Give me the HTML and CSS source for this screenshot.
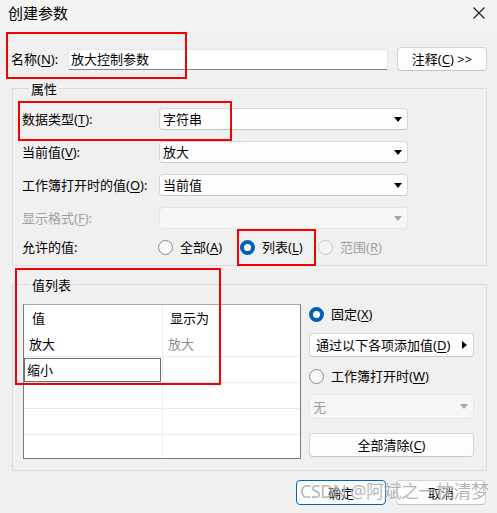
FILE: index.html
```html
<!DOCTYPE html>
<html lang="zh-CN">
<head>
    <meta charset="UTF-8">
    <title>创建参数</title>
    <link rel="stylesheet" href="styles.css">
</head>
<body>

    <div class="window">
        <div class="titlebar">
            <span class="title">创建参数</span>
            <svg class="close" width="12" height="12" viewBox="0 0 12 12">
                <path d="M0.5 0.5L11.5 11.5M11.5 0.5L0.5 11.5" stroke="#1b1b1b" stroke-width="1.1" fill="none"/>
            </svg>
        </div>

        <div class="name-row">
            <span class="name-label">名称(<u>N</u>):</span>
            <div class="textbox">放大控制参数</div>
            <div class="btn btn-note"><span>注释(<u>C</u>) &gt;&gt;</span></div>
        </div>

        <!-- 属性 -->
        <div class="group group-props">
            <span class="group-title">属性</span>

            <div class="form-row">
                <span class="form-label">数据类型(<u>T</u>):</span>
                <div class="combo"><span>字符串</span><i class="arrow"></i></div>
            </div>
            <div class="form-row">
                <span class="form-label">当前值(<u>V</u>):</span>
                <div class="combo"><span>放大</span><i class="arrow"></i></div>
            </div>
            <div class="form-row">
                <span class="form-label">工作簿打开时的值(<u>O</u>):</span>
                <div class="combo"><span>当前值</span><i class="arrow"></i></div>
            </div>
            <div class="form-row">
                <span class="form-label disabled">显示格式(<u>F</u>):</span>
                <div class="combo combo-disabled"><span></span><i class="arrow"></i></div>
            </div>
            <div class="form-row radio-row">
                <span class="form-label">允许的值:</span>
                <div class="radios">
                    <span class="radio radio-all"><i class="circle"></i><span>全部(<u>A</u>)</span></span>
                    <span class="radio radio-list checked"><i class="circle"></i><span>列表(<u>L</u>)</span></span>
                    <span class="radio disabled"><i class="circle"></i><span>范围(<u>R</u>)</span></span>
                </div>
            </div>
        </div>

        <!-- 值列表 -->
        <div class="group group-list">
            <span class="group-title">值列表</span>
            <div class="list-body">
                <div class="value-table">
                    <div class="vt-row vt-head">
                        <div class="vt-cell">值</div>
                        <div class="vt-cell">显示为</div>
                    </div>
                    <div class="vt-row">
                        <div class="vt-cell">放大</div>
                        <div class="vt-cell muted">放大</div>
                    </div>
                    <div class="vt-row">
                        <div class="vt-cell vt-edit"><div class="cell-edit">缩小</div></div>
                        <div class="vt-cell"></div>
                    </div>
                    <div class="vt-row">
                        <div class="vt-cell"></div>
                        <div class="vt-cell"></div>
                    </div>
                    <div class="vt-row">
                        <div class="vt-cell"></div>
                        <div class="vt-cell"></div>
                    </div>
                    <div class="vt-row vt-last">
                        <div class="vt-cell"></div>
                        <div class="vt-cell"></div>
                    </div>
                </div>

                <div class="list-side">
                    <span class="radio checked side-radio"><i class="circle"></i><span>固定(<u>X</u>)</span></span>
                    <div class="btn btn-add"><span>通过以下各项添加值(<u>D</u>)</span><i class="arrow-right"></i></div>
                    <span class="radio side-radio side-radio-2"><i class="circle"></i><span>工作簿打开时(<u>W</u>)</span></span>
                    <div class="combo combo-disabled combo-none"><span>无</span><i class="arrow"></i></div>
                    <div class="btn btn-clear"><span>全部清除(<u>C</u>)</span></div>
                </div>
            </div>
        </div>

        <div class="footer">
            <div class="btn btn-ok">确定</div>
            <div class="btn">取消</div>
        </div>

        <!-- red annotation boxes -->
        <span class="mark mark-name"></span>
        <span class="mark mark-type"></span>
        <span class="mark mark-list"></span>
        <span class="mark mark-values"></span>

        <span class="watermark">CSDN @阿斌之一枕清梦</span>
    </div>

</body>
</html>
```

FILE: styles.css
```css
body {
    margin: 0;
    font-family: "Noto Sans", "Noto Sans CJK SC", sans-serif;
    font-size: 13px;
    color: #000;
    background-color: #f0f0f0;
}

u {
    text-decoration-thickness: 1px;
    text-underline-offset: 2px;
}

.window {
    position: relative;
    width: 497px;
    height: 513px;
    background-color: #f0f0f0;
    overflow: hidden;
}

.titlebar {
    height: 26px;
    padding: 0 12px 6px 8px;
    display: flex;
    align-items: center;
    justify-content: space-between;
    background-color: #f3f3f3;
}

.title {
    font-size: 15px;
    line-height: 18px;
}

/* name row */
.name-row {
    display: flex;
    align-items: center;
    height: 24px;
    margin-top: 15px;
    padding-left: 11px;
}

.name-label {
    width: 57px;
    line-height: 18px;
}

.textbox {
    width: 316px;
    height: 19px;
    padding-left: 2px;
    line-height: 19px;
    background-color: #fff;
    border: 1px solid #e6e6e6;
    border-bottom-color: #868686;
    border-radius: 3px 3px 0 0;
    font-size: 13px;
}

.btn {
    box-sizing: border-box;
    height: 24px;
    display: flex;
    align-items: center;
    justify-content: center;
    background-color: #fdfdfd;
    border: 1px solid #d4d4d4;
    border-bottom-color: #c4c4c4;
    border-radius: 4px;
    line-height: 18px;
}

.btn-note {
    width: 90px;
    margin-left: 9px;
}

/* group boxes */
.group {
    box-sizing: border-box;
    width: 475px;
    margin-left: 12px;
    border: 1px solid #dcdcdc;
}

.group-title {
    display: block;
    width: fit-content;
    margin: -9px 0 0 7px;
    padding: 0 2px;
    line-height: 18px;
    background-color: #f0f0f0;
}

.group-props {
    margin-top: 17px;
    padding: 0 0 7px 9px;
}

.form-row {
    display: flex;
    align-items: center;
    height: 22px;
    margin-top: 11px;
}

.group-props .group-title + .form-row {
    margin-top: 10px;
}

.form-label {
    width: 137px;
    line-height: 18px;
}

.form-label.disabled {
    color: #a0a0a0;
}

.combo {
    box-sizing: border-box;
    width: 249px;
    height: 22px;
    display: flex;
    align-items: center;
    justify-content: space-between;
    padding: 0 5px 0 3px;
    background-color: #fdfdfd;
    border: 1px solid #d6d6d6;
    border-bottom-color: #c8c8c8;
    border-radius: 4px;
    line-height: 18px;
}

.combo-disabled {
    background-color: #f6f6f6;
    border-color: #e6e6e6;
    color: #9d9d9d;
}

.arrow {
    width: 0;
    height: 0;
    border-left: 4px solid transparent;
    border-right: 4px solid transparent;
    border-top: 5px solid #000;
}

.combo-disabled .arrow {
    border-top-color: #a4a4a4;
}

.arrow-right {
    width: 0;
    height: 0;
    border-top: 4px solid transparent;
    border-bottom: 4px solid transparent;
    border-left: 5px solid #000;
}

.radio-row {
    margin-top: 7px;
}

.radios {
    display: flex;
    align-items: center;
    margin-left: -1px;
}

.radio {
    display: flex;
    align-items: center;
    gap: 7px;
    line-height: 18px;
}

.radio-all {
    width: 82px;
}

.radio-list {
    width: 78px;
}

.circle {
    box-sizing: border-box;
    width: 15px;
    height: 15px;
    border-radius: 50%;
    border: 1px solid #8b8b8b;
    background-color: #f8f8f8;
}

.radio.checked .circle {
    border: 4.5px solid #005fb8;
    background-color: #fff;
}

.radio.disabled {
    color: #a0a0a0;
}

.radio.disabled .circle {
    border-color: #c8c8c8;
    background-color: #f5f5f5;
}

/* value list */
.group-list {
    margin-top: 18px;
    padding: 0 0 11px 10px;
}

.list-body {
    display: flex;
    gap: 8px;
    margin-top: 10px;
}

.value-table {
    box-sizing: border-box;
    width: 278px;
    height: 155px;
    background-color: #fff;
    border: 1px solid #7c7c7c;
    border-top-color: #a8a8a8;
}

.vt-row {
    display: grid;
    grid-template-columns: 138px 1fr;
    height: 26px;
    box-sizing: border-box;
    border-bottom: 1px solid #ececec;
}

.vt-head {
    border-bottom: none;
}

.vt-last {
    height: 23px;
    border-bottom: none;
}

.vt-cell {
    display: flex;
    align-items: center;
    padding-left: 5px;
    line-height: 18px;
}

.vt-cell + .vt-cell {
    border-left: 1px solid #ececec;
}

.vt-head .vt-cell:first-child {
    padding-left: 8px;
}

.vt-head .vt-cell + .vt-cell {
    padding-left: 7px;
}

.vt-cell.muted {
    color: #8e8e8e;
}

.vt-edit {
    padding-left: 0;
    align-items: flex-start;
}

.cell-edit {
    box-sizing: border-box;
    width: 137px;
    height: 24px;
    margin-top: 1px;
    padding-left: 2px;
    border: 1px solid #6d6d6d;
    line-height: 22px;
    background-color: #fff;
}

.list-side {
    display: flex;
    flex-direction: column;
    width: 165px;
}

.side-radio {
    height: 20px;
}

.btn-add {
    margin-top: 9px;
    justify-content: space-between;
    padding: 0 6px 0 6px;
}

.side-radio-2 {
    margin-top: 9px;
}

.combo-none {
    width: 165px;
    height: 25px;
    margin-top: 8px;
    border-radius: 5px;
}

.btn-clear {
    margin-top: 14px;
}

/* footer */
.footer {
    display: flex;
    justify-content: flex-end;
    gap: 10px;
    margin-top: 9px;
    padding-right: 11px;
}

.footer .btn {
    width: 90px;
    height: 25px;
}

.btn-ok {
    border-color: #0067c0;
}

/* annotation overlays */
.mark {
    position: absolute;
    box-sizing: border-box;
    border: 2px solid #f40000;
}

.mark-name {
    left: 6px;
    top: 32px;
    width: 181px;
    height: 47px;
}

.mark-type {
    left: 18px;
    top: 101px;
    width: 214px;
    height: 40px;
}

.mark-list {
    left: 237px;
    top: 229px;
    width: 79px;
    height: 37px;
}

.mark-values {
    left: 15px;
    top: 268px;
    width: 206px;
    height: 117px;
}

.watermark {
    position: absolute;
    left: 300px;
    top: 479px;
    font-size: 18px;
    line-height: 24px;
    letter-spacing: -0.5px;
    color: rgba(110, 110, 110, 0.5);
    text-shadow: 0 0 2px rgba(255, 255, 255, 0.9);
    white-space: nowrap;
}
```
